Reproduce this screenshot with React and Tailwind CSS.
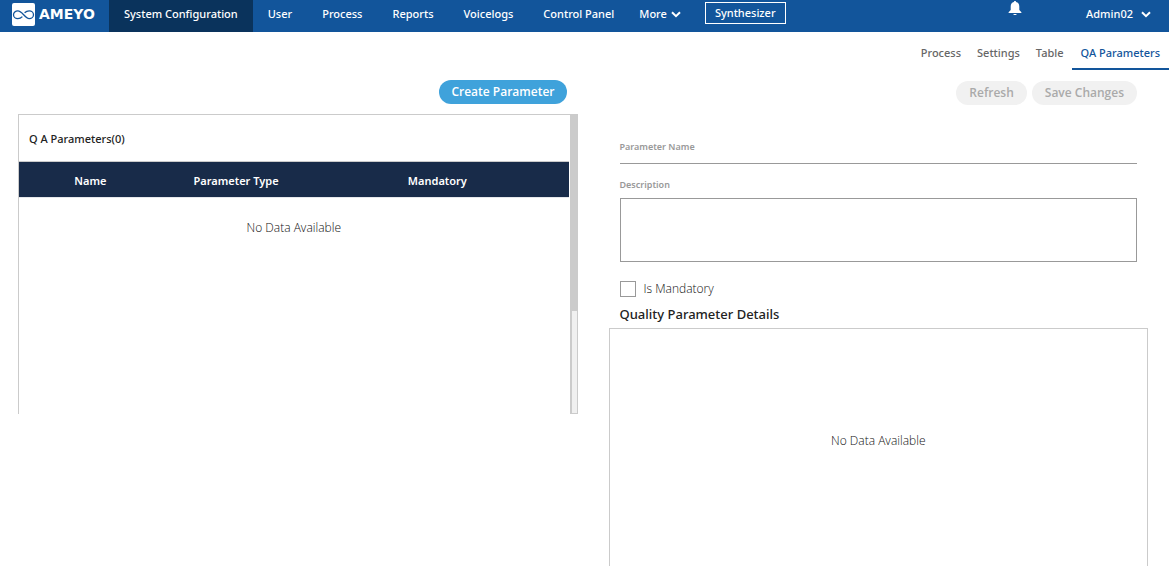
const navItems = ["System Configuration", "User", "Process", "Reports", "Voicelogs", "Control Panel"];

const tabs = ["Process", "Settings", "Table", "QA Parameters"];

function Chevron() {
  return (
    <svg viewBox="0 0 10 7" className="h-[7px] w-[10px]" fill="none" stroke="currentColor" strokeWidth="2" aria-hidden="true">
      <path d="M1 1.2 5 5.2 9 1.2" />
    </svg>
  );
}

function Logo() {
  return (
    <a href="#home" className="flex h-7 w-[109px] shrink-0 items-center gap-1 pl-3">
      <svg viewBox="0 0 23 23" className="h-[23px] w-[23px] shrink-0" aria-hidden="true">
        <rect width="23" height="23" rx="2" fill="#fff" />
        <path
          d="M12.6 9.800C13.800 8.600 15.300 7.800 17.200 7.800c2.300 0 4.300 1.700 4.300 3.900s-2 3.900-4.300 3.900c-4.300 0-6.900-7.800-11.400-7.800-2.300 0-4.300 1.700-4.300 3.900s2 3.900 4.300 3.900c1.900 0 3.400-.8 4.600-2"
          fill="none"
          stroke="#12559b"
          strokeWidth="1.3"
        />
      </svg>
      <span className="font-['DejaVu_Sans'] text-[14px] font-bold leading-none">AMEYO</span>
    </a>
  );
}

function TopBar() {
  return (
    <header className="flex h-8 items-start bg-[#12559b] font-medium text-white">
      <Logo />
      <nav className="flex items-start">
        {navItems.map((item, i) => (
          <a
            key={item}
            href="#nav"
            className={i === 0 ? "h-8 bg-[#0a335c] px-[15px] leading-7" : "h-8 px-[15px] leading-7"}
          >
            {item}
          </a>
        ))}
        <button type="button" className="flex h-7 items-center gap-1 px-[10px]">
          More <Chevron />
        </button>
      </nav>
      <button type="button" className="ml-[14px] mt-[2px] h-[22px] border border-white px-[9px] leading-5">
        Synthesizer
      </button>
      <div className="ml-auto flex items-start">
        <button type="button" aria-label="Notifications" className="mr-16">
          <svg viewBox="0 0 14 16" className="h-4 w-[14px]" fill="currentColor" aria-hidden="true">
            <path d="M7 1C6.300 1 5.900 1.500 5.900 2.100 3.800 2.600 2.700 4.300 2.700 6.500V10L.6 12.200V13H13.400V12.200L11.300 10V6.500C11.300 4.300 10.200 2.600 8.100 2.100 8.100 1.500 7.700 1 7 1ZM5.200 13.900H8.800C8.600 14.600 7.900 15 7 15S5.400 14.600 5.200 13.900Z" />
          </svg>
        </button>
        <button type="button" className="mr-[18px] flex h-7 items-center gap-2">
          Admin02 <Chevron />
        </button>
      </div>
    </header>
  );
}

function ParameterList() {
  return (
    <section className="pl-[18px] pr-[7px] pt-[10px]">
      <div className="flex justify-end pr-[11px]">
        <button
          type="button"
          className="h-6 rounded-full bg-[#3fa2db] px-3 font-['Open_Sans',sans-serif] text-[12px] font-semibold text-white"
        >
          Create Parameter
        </button>
      </div>
      <div className="mt-[10px] flex h-[300px]">
        <div className="flex-1 border-l border-t border-[#cbcbcb] pr-px">
          <h2 className="h-[47px] border-b border-[#cbcbcb] pl-[10px] font-medium leading-[48px] text-[#222]">
            Q A Parameters(0)
          </h2>
          <table className="w-full table-fixed">
            <colgroup>
              <col className="w-[26%]" />
              <col className="w-[27%]" />
              <col className="w-[47%]" />
            </colgroup>
            <thead>
              <tr className="h-[35px] bg-[#182b49] text-white">
                <th className="pt-[3px] font-semibold">Name</th>
                <th className="pt-[3px] font-semibold">Parameter Type</th>
                <th className="pt-[3px] pr-1 font-semibold">Mandatory</th>
              </tr>
            </thead>
            <tbody>
              <tr>
                <td
                  colSpan={3}
                  className="h-[62px] border-t border-[#e5e7eb] text-center font-['Open_Sans',sans-serif] text-[12px] font-light text-[#111]"
                >
                  No Data Available
                </td>
              </tr>
            </tbody>
          </table>
        </div>
        <div className="w-2 border border-[#cbcbcb] border-l-2 bg-[#f0f0f0]">
          <div className="h-[196px] bg-[#cbcbcb]" />
        </div>
      </div>
    </section>
  );
}

function ParameterForm() {
  return (
    <section className="flex flex-col pl-6 pr-[21px] pt-[11px] font-['Open_Sans',sans-serif] text-[12px]">
      <div className="flex justify-end gap-[5px] pr-[11px] font-semibold text-[#aaa]">
        <button type="button" className="h-6 rounded-full bg-[#f1f1f1] px-[13px]">
          Refresh
        </button>
        <button type="button" className="h-6 rounded-full bg-[#f1f1f1] px-[13px]">
          Save Changes
        </button>
      </div>
      <div className="flex flex-col px-[11px] pt-[34px]">
        <label htmlFor="name" className="font-['Noto_Sans',sans-serif] text-[9px] font-semibold leading-4 text-[#999]">
          Parameter Name
        </label>
        <input id="name" type="text" className="h-[9px] border-b border-[#999] text-[10px] outline-none" />
        <label
          htmlFor="description"
          className="mt-[13px] font-['Noto_Sans',sans-serif] text-[9px] font-semibold leading-4 text-[#999]"
        >
          Description
        </label>
        <textarea id="description" className="mt-[5px] h-16 resize-none border border-[#999] outline-none" />
        <div className="mt-[19px] flex items-center gap-2">
          <input
            id="mandatory"
            type="checkbox"
            className="h-4 w-4 appearance-none border border-[#999] bg-white checked:bg-[#12559b]"
          />
          <label htmlFor="mandatory" className="font-light leading-4 text-[#111]">
            Is Mandatory
          </label>
        </div>
        <h2 className="mt-[7px] font-['Noto_Sans',sans-serif] text-[13px] font-medium leading-5 text-[#222]">
          Quality Parameter Details
        </h2>
      </div>
      <div className="mt-1 flex-1 border border-b-0 border-[#cbcbcb] pt-[102px] text-center font-light leading-5 text-[#111]">
        No Data Available
      </div>
    </section>
  );
}

export default function App() {
  return (
    <main className="flex min-h-screen flex-col bg-white font-['Noto_Sans',sans-serif] text-[11px] text-[#333]">
      <TopBar />
      <nav className="flex h-[38px] justify-end font-medium text-[#666]">
        {tabs.map((tab) => (
          <a
            key={tab}
            href="#tab"
            className={
              tab === "QA Parameters"
                ? "border-b-2 border-[#12559b] px-[9px] leading-[42px] text-[#12559b]"
                : "px-2 leading-[42px]"
            }
          >
            {tab}
          </a>
        ))}
      </nav>
      <div className="grid flex-1 grid-cols-2">
        <ParameterList />
        <ParameterForm />
      </div>
    </main>
  );
}
